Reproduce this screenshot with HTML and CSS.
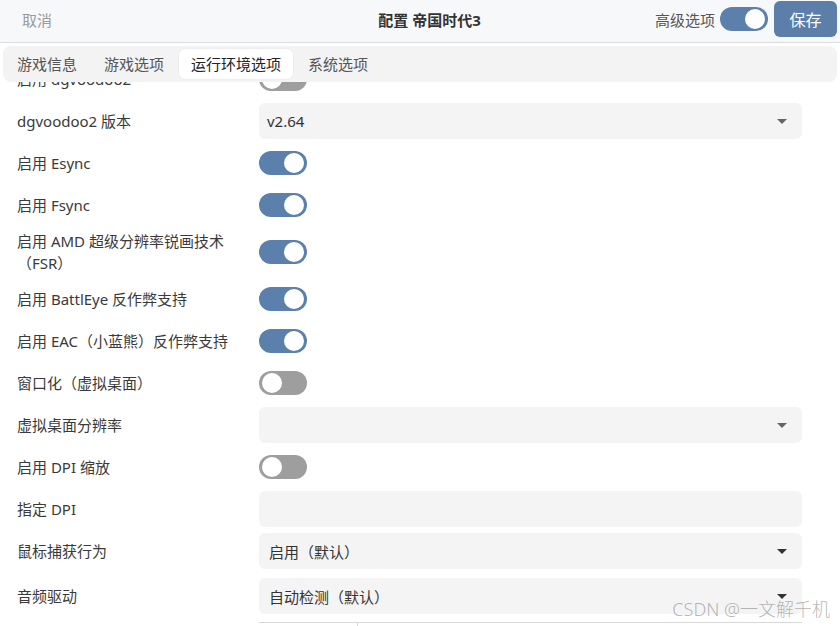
FILE: index.html
```html
<!DOCTYPE html>
<html lang="zh-CN">
<head>
    <meta charset="UTF-8">
    <meta name="viewport" content="width=device-width, initial-scale=1.0">
    <title>配置 帝国时代3</title>
    <link rel="stylesheet" href="styles.css">
</head>
<body>
    <!-- Barre du haut -->
    <header class="topbar">
        <div class="cancel">取消</div>
        <div class="title">配置 帝国时代3</div>
        <div class="actions">
            <span class="advanced">高级选项</span>
            <span class="switch on"></span>
            <button class="save">保存</button>
        </div>
    </header>

    <main class="main">
        <div class="tabs-wrap">
            <nav class="tabs">
                <div class="tab">游戏信息</div>
                <div class="tab">游戏选项</div>
                <div class="tab active">运行环境选项</div>
                <div class="tab">系统选项</div>
            </nav>
        </div>

        <div class="options">
            <div class="row">
                <div class="label">启用 dgvoodoo2</div>
                <div class="control"><span class="switch"></span></div>
            </div>
            <div class="row">
                <div class="label">dgvoodoo2 版本</div>
                <div class="control"><div class="select"><span>v2.64</span><i class="arrow"></i></div></div>
            </div>
            <div class="row">
                <div class="label">启用 Esync</div>
                <div class="control"><span class="switch on"></span></div>
            </div>
            <div class="row">
                <div class="label">启用 Fsync</div>
                <div class="control"><span class="switch on"></span></div>
            </div>
            <div class="row tall">
                <div class="label">启用 AMD 超级分辨率锐画技术（FSR）</div>
                <div class="control"><span class="switch on"></span></div>
            </div>
            <div class="row">
                <div class="label">启用 BattlEye 反作弊支持</div>
                <div class="control"><span class="switch on"></span></div>
            </div>
            <div class="row">
                <div class="label">启用 EAC（小蓝熊）反作弊支持</div>
                <div class="control"><span class="switch on"></span></div>
            </div>
            <div class="row">
                <div class="label">窗口化（虚拟桌面）</div>
                <div class="control"><span class="switch"></span></div>
            </div>
            <div class="row">
                <div class="label">虚拟桌面分辨率</div>
                <div class="control"><div class="select"><span></span><i class="arrow"></i></div></div>
            </div>
            <div class="row">
                <div class="label">启用 DPI 缩放</div>
                <div class="control"><span class="switch"></span></div>
            </div>
            <div class="row">
                <div class="label">指定 DPI</div>
                <div class="control"><div class="input"></div></div>
            </div>
            <div class="row">
                <div class="label">鼠标捕获行为</div>
                <div class="control"><div class="select combo"><span>启用（默认）</span><i class="arrow dark"></i></div></div>
            </div>
            <div class="row audio">
                <div class="label">音频驱动</div>
                <div class="control"><div class="select combo"><span>自动检测（默认）</span><i class="arrow dark"></i></div></div>
            </div>
            <div class="row last">
                <div class="label"></div>
                <div class="control"><div class="table"><div class="cell"></div><div class="cell"></div></div></div>
            </div>
        </div>
    </main>

    <div class="watermark">CSDN @一文解千机</div>
</body>
</html>
```

FILE: styles.css
```css
body {
    margin: 0;
    font-family: "Noto Sans", "Noto Sans CJK SC", sans-serif;
    font-size: 15px;
    color: #3a3a3a;
    background-color: #fff;
    width: 840px;
    height: 626px;
    overflow: hidden;
    position: relative;
}

/* Barre du haut */
.topbar {
    display: grid;
    grid-template-columns: 1fr auto 1fr;
    align-items: center;
    height: 36px;
    padding: 1px 3px 5px 22px;
    background-color: #f7f8fa;
    border-bottom: 1px solid #dcdcdc;
    position: relative;
    z-index: 2;
}

.cancel {
    color: #9a9a9a;
}

.title {
    font-weight: bold;
    color: #333;
}

.actions {
    display: flex;
    align-items: center;
    justify-content: flex-end;
    gap: 6px;
}

.advanced {
    color: #555;
    margin-right: -1px;
}

.save {
    border: none;
    background-color: #5b7fa9;
    color: #fff;
    font-family: inherit;
    font-size: 16px;
    height: 36px;
    width: 63px;
    border-radius: 6px;
}

/* Onglets */
.main {
    height: 583px;
    overflow: hidden;
}

.tabs-wrap {
    background-color: #fff;
    padding: 3px 3px 0;
    position: relative;
    z-index: 1;
}

.tabs {
    display: flex;
    gap: 3px;
    height: 36px;
    padding: 0 2px;
    align-items: center;
    background-color: #f3f3f3;
    border-radius: 8px;
}

.tab {
    padding: 0 12px;
    height: 30px;
    line-height: 30px;
    color: #555;
    border-radius: 6px;
}

.tab.active {
    background-color: #fff;
    color: #222;
    box-shadow: 0 0 2px rgba(0, 0, 0, 0.08);
}

/* Liste des options */
.options {
    margin-top: -24px; /* la liste est déjà un peu défilée */
}

.row {
    display: grid;
    grid-template-columns: 242px 1fr;
    align-items: center;
    min-height: 42px;
    padding: 0 38px 0 17px;
}

.row.tall {
    padding-top: 4px;
    padding-bottom: 4px;
}

.row.audio {
    margin-top: 3px;
}

.row.last {
    align-items: start;
}

.label {
    line-height: 22px;
    padding-right: 20px;
}

.switch {
    display: block;
    width: 48px;
    height: 24px;
    border-radius: 12px;
    background-color: #9e9e9e;
    position: relative;
}

.switch::after {
    content: "";
    position: absolute;
    top: 2px;
    left: 3px;
    width: 20px;
    height: 20px;
    border-radius: 50%;
    background-color: #fff;
}

.switch.on {
    background-color: #5b80ab;
}

.switch.on::after {
    left: 25px;
}

.select,
.input {
    height: 36px;
    background-color: #f4f4f4;
    border-radius: 6px;
    box-sizing: border-box;
}

.select {
    display: flex;
    align-items: center;
    justify-content: space-between;
    padding: 0 15px 0 8px;
    color: #333;
}

.select.combo {
    padding-left: 10px;
}

.arrow {
    width: 0;
    height: 0;
    border-left: 5px solid transparent;
    border-right: 5px solid transparent;
    border-top: 5px solid #666;
}

.arrow.dark {
    border-top-color: #333;
}

.table {
    display: flex;
    height: 20px;
    margin-top: 5px;
    border-top: 1px solid #d8d8d8;
}

.cell:first-child {
    width: 98px;
    border-right: 1px solid #d8d8d8;
}

.watermark {
    position: absolute;
    right: 10px;
    bottom: 5px;
    color: rgba(150, 150, 150, 0.7);
    font-size: 18px;
    font-weight: 300;
}
```
